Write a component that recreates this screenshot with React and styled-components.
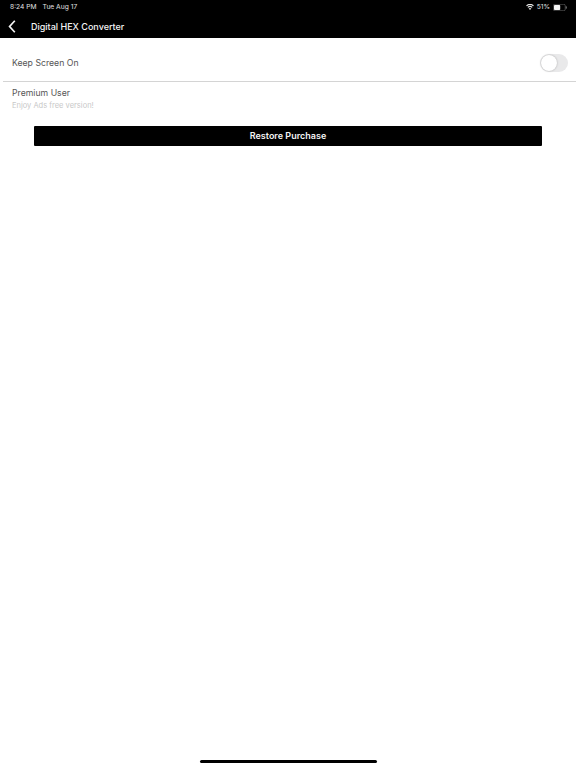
import styled, { createGlobalStyle } from "styled-components";

const GlobalStyle = createGlobalStyle`
  html, body {
    margin: 0;
    padding: 0;
    background: #fff;
    font-family: Inter, "Liberation Sans", sans-serif;
  }
`;

const Page = styled.div`
  width: 576px;
  height: 768px;
  display: flex;
  flex-direction: column;
  overflow: hidden;
`;

const Header = styled.header`
  height: 38px;
  flex: none;
  background: #000;
  color: #fff;
  display: flex;
  flex-direction: column;
`;

const StatusBar = styled.div`
  height: 14px;
  padding: 0 9px 0 10px;
  display: flex;
  align-items: center;
  justify-content: space-between;
  font-size: 6.7px;
  color: #e0e0e0;
`;

const StatusGroup = styled.div`
  display: flex;
  align-items: center;
  gap: ${(p) => p.$gap || 3}px;
`;

const TitleBar = styled.div`
  flex: 1;
  display: flex;
  align-items: center;
  gap: 15px;
  padding: 0 0 0 8px;
`;

const Title = styled.div`
  font-size: 9px;
  font-weight: 500;
  color: #f4f4f4;
`;

const Row = styled.div`
  height: 37px;
  margin-left: 3px;
  padding: 6px 8px 0 9px;
  display: flex;
  align-items: center;
  justify-content: space-between;
  border-bottom: 1px solid #d4d4d4;
`;

const Label = styled.div`
  font-size: 8.7px;
  line-height: 12px;
  color: #555;
`;

const Switch = styled.div`
  width: 28px;
  height: 18px;
  border-radius: 9px;
  background: #e9e9ea;
  position: relative;
`;

const Knob = styled.div`
  position: absolute;
  left: 1px;
  top: 1px;
  width: 16px;
  height: 16px;
  border-radius: 50%;
  background: #fff;
  box-shadow: 0 0 2px rgba(0, 0, 0, 0.3);
`;

const Premium = styled.div`
  padding: 5px 12px 0;
  display: flex;
  flex-direction: column;
  gap: 1px;
`;

const Hint = styled.div`
  font-size: 7.5px;
  line-height: 11px;
  color: #c8c8c8;
`;

const RestoreButton = styled.button`
  display: block;
  height: 20px;
  margin: 14.5px 34px 0;
  padding: 0;
  border: none;
  border-radius: 1px;
  background: #000;
  color: #f4f4f4;
  font-family: inherit;
  font-size: 9px;
  font-weight: 600;
`;

const HomeBar = styled.div`
  width: 177px;
  height: 3px;
  border-radius: 2px;
  background: #000;
  margin: auto auto 5px;
`;

const App = () => {
  return (
    <Page>
      <GlobalStyle />
      <Header>
        <StatusBar>
          <StatusGroup $gap={6}>
            <span>8:24 PM</span>
            <span>Tue Aug 17</span>
          </StatusGroup>
          <StatusGroup>
            <svg width="8" height="6" viewBox="0 0 18 14" fill="#e8e8e8">
              <path d="M9 14l-3-3.6a4.6 4.6 0 0 1 6 0z" />
              <path d="M4.7 8.8l-1.6-1.9a9 9 0 0 1 11.8 0l-1.6 1.9a6.6 6.6 0 0 0-8.6 0z" />
              <path d="M1.8 5.3L0 3.4a13.6 13.6 0 0 1 18 0l-1.8 1.9a11 11 0 0 0-14.4 0z" />
            </svg>
            <span>51%</span>
            <svg width="14" height="7" viewBox="0 0 14 7">
              <rect x="0.25" y="0.25" width="12" height="6.5" rx="1.6" fill="none" stroke="#8a8a8a" strokeWidth="0.5" />
              <rect x="1" y="1" width="6.2" height="5" rx="0.8" fill="#f4f4f4" />
              <rect x="12.8" y="2.3" width="0.9" height="2.4" rx="0.4" fill="#8a8a8a" />
            </svg>
          </StatusGroup>
        </StatusBar>
        <TitleBar>
          <svg width="8" height="13" viewBox="0 0 8 13" fill="none" stroke="#f4f4f4" strokeWidth="1.7">
            <path d="M6.8 0.8L1.6 6.5l5.2 5.7" />
          </svg>
          <Title>Digital HEX Converter</Title>
        </TitleBar>
      </Header>
      <Row>
        <Label>Keep Screen On</Label>
        <Switch>
          <Knob />
        </Switch>
      </Row>
      <Premium>
        <Label>Premium User</Label>
        <Hint>Enjoy Ads free version!</Hint>
      </Premium>
      <RestoreButton>Restore Purchase</RestoreButton>
      <HomeBar />
    </Page>
  );
};

export default App;
